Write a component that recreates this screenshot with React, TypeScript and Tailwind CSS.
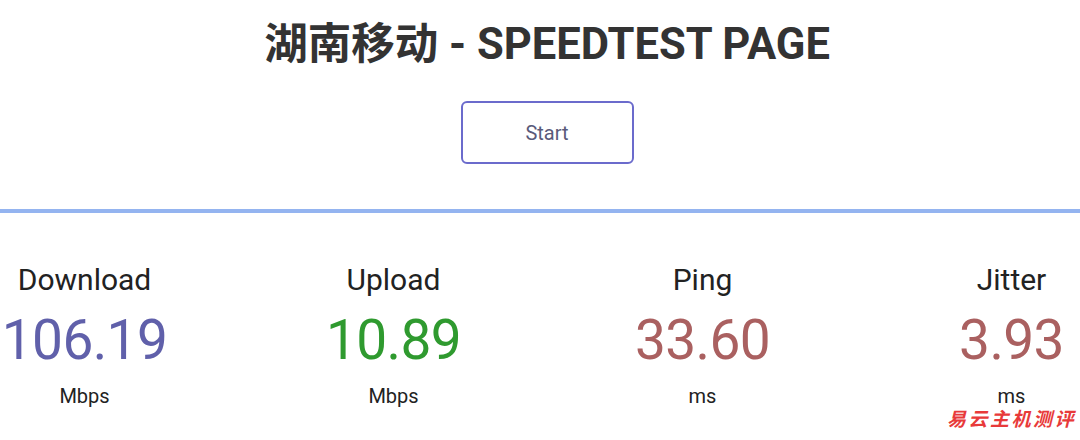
import React from "react";

const stats = [
  { label: "Download", value: "106.19", unit: "Mbps", color: "text-[#6060aa]" },
  { label: "Upload", value: "10.89", unit: "Mbps", color: "text-[#2f9a2f]" },
  { label: "Ping", value: "33.60", unit: "ms", color: "text-[#aa6060]" },
  { label: "Jitter", value: "3.93", unit: "ms", color: "text-[#aa6060]" },
];

export default function App() {
  return (
    <div className="relative h-[440px] w-full overflow-hidden bg-white font-['Roboto','Noto_Sans_CJK_SC',sans-serif]">
      {/* Title */}
      <h1 className="pl-[14px] pt-5 text-center text-[43.5px] font-bold leading-[50px] text-[#333]">
        湖南移动 - SPEEDTEST PAGE
      </h1>

      {/* Start button */}
      <div className="mt-[31px] flex justify-center pl-[14px]">
        <button className="h-[63px] w-[173px] rounded-md border-2 border-[#6b6bcc] text-[20px] text-[#5a5a7a]">
          Start
        </button>
      </div>

      {/* Progress bar */}
      <div className="mt-[45px] h-1 w-full bg-[#94b4f0]" />

      {/* Results */}
      <div className="ml-[-70px] mt-[49px] grid w-[1236px] grid-cols-4">
        {stats.map((s) => (
          <div key={s.label} className="flex flex-col items-center">
            <div className="text-[30px] leading-[36px] text-[#222]">{s.label}</div>
            <div className={`mt-[14px] text-[55px] leading-[56px] tracking-[-0.6px] ${s.color}`}>{s.value}</div>
            <div className="mt-[17px] text-[20px] leading-[22px] text-[#222]">{s.unit}</div>
          </div>
        ))}
      </div>

      {/* Watermark */}
      <div className="absolute bottom-[11px] right-[4px] text-[19px] font-bold italic leading-[19px] tracking-[2.5px] text-[#e83a3a]">
        易云主机测评
      </div>
    </div>
  );
}
